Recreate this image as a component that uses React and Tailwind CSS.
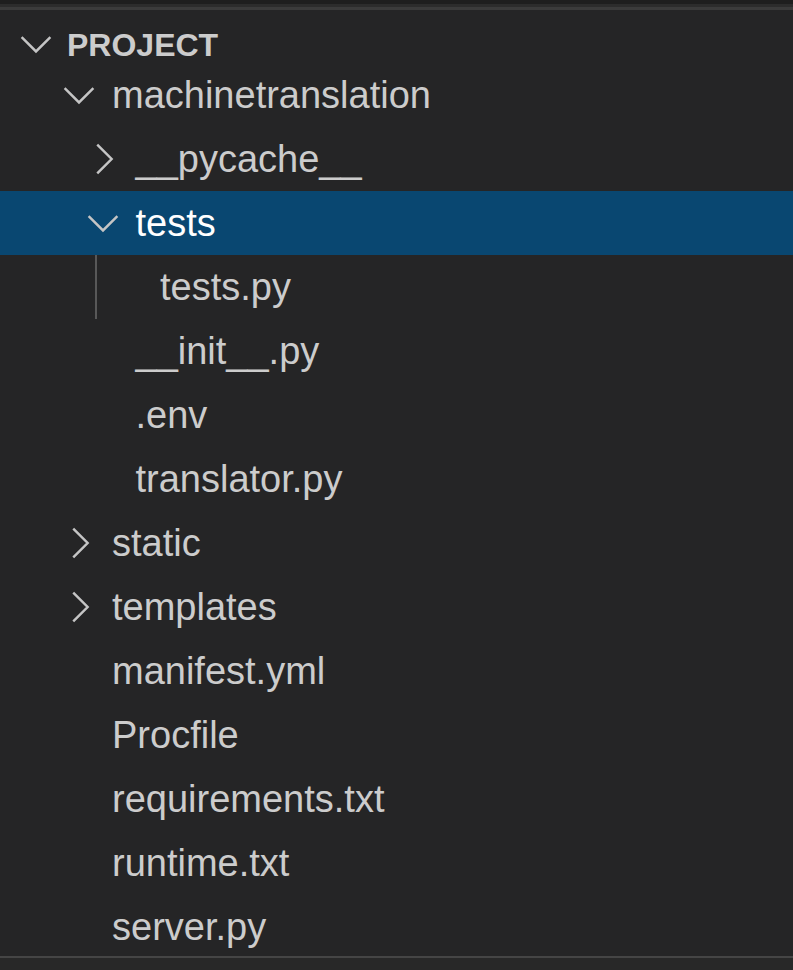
import React from "react";

const FONT = { fontFamily: '"Liberation Sans", Arial, sans-serif' };

const Chevron = ({ open }) => (
  <svg width="46" height="46" viewBox="0 0 16 16" className="shrink-0">
    {open ? (
      <path d="M3 5.6 L8 10.6 L13 5.6" fill="none" stroke="#c5c5c5" strokeWidth="0.85" />
    ) : (
      <path d="M6 3 L11 8 L6 13" fill="none" stroke="#c5c5c5" strokeWidth="0.85" />
    )}
  </svg>
);

const indent = {
  1: "pl-[56px]",
  2: "pl-[79.5px]",
};

const items = [
  { name: "machinetranslation", depth: 1, folder: true, open: true },
  { name: "__pycache__", depth: 2, folder: true, open: false },
  { name: "tests", depth: 2, folder: true, open: true, selected: true },
  { name: "tests.py", depth: 3 },
  { name: "__init__.py", depth: 2 },
  { name: ".env", depth: 2 },
  { name: "translator.py", depth: 2 },
  { name: "static", depth: 1, folder: true, open: false },
  { name: "templates", depth: 1, folder: true, open: false },
  { name: "manifest.yml", depth: 1 },
  { name: "Procfile", depth: 1 },
  { name: "requirements.txt", depth: 1 },
  { name: "runtime.txt", depth: 1 },
  { name: "server.py", depth: 1 },
];

const Row = ({ item }) => {
  if (item.depth === 3) {
    // nested child of "tests" with its indent guide
    return (
      <div className="flex h-[64px] shrink-0 items-stretch pl-[95px]">
        <div className="w-[2px] bg-[#585858]" />
        <div className="flex items-center pl-[63px] text-[38px] leading-[64px] text-[#cccccc]">
          {item.name}
        </div>
      </div>
    );
  }

  return (
    <div
      className={`flex h-[64px] shrink-0 items-center ${indent[item.depth]} ${
        item.selected ? "bg-[#094771] text-white" : "text-[#cccccc]"
      }`}
    >
      {item.folder ? <Chevron open={item.open} /> : <div className="w-[46px] shrink-0" />}
      <span className="ml-[10px] text-[38px] leading-[64px] whitespace-nowrap">{item.name}</span>
    </div>
  );
};

export default function App() {
  return (
    <div className="w-[793px] h-[970px] overflow-hidden bg-[#252526] flex flex-col" style={FONT}>
      {/* top edge */}
      <div className="h-[4px] shrink-0 bg-[#1e1e1e]" />
      <div className="h-[3px] shrink-0 bg-[#2c2c2c]" />
      <div className="h-[3px] shrink-0 bg-[#3b3b3b]" />

      {/* section header */}
      <div className="flex h-[53px] shrink-0 items-start pl-[13px] pt-[11px]">
        <Chevron open />
        <span className="ml-[8px] pt-[8px] text-[32px] font-bold leading-[32px] text-[#cccccc]">
          PROJECT
        </span>
      </div>

      {/* tree, clipped by the panel edge */}
      <div className="flex h-[893px] shrink-0 flex-col overflow-hidden">
        {items.map((item) => (
          <Row key={item.name} item={item} />
        ))}
      </div>

      {/* bottom edge */}
      <div className="h-[2px] shrink-0 bg-[#454545]" />
      <div className="flex-1 bg-[#282828]" />
    </div>
  );
}
